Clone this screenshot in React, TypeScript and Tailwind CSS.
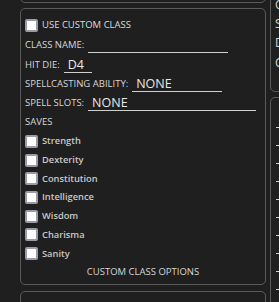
import React from 'react';

const saves = ['Strength', 'Dexterity', 'Constitution', 'Intelligence', 'Wisdom', 'Charisma', 'Sanity'];

function Box() {
  return <span className="block w-[13px] h-[13px] rounded-[2px] border-2 border-[#9a9aa8] bg-white shrink-0" />;
}

function Field({ label, value, width, h }: { label: string; value?: string; width: string; h: string }) {
  return (
    <div className={`flex items-end ${h}`}>
      <span className="text-[9.5px] leading-[13px] pb-[2px] text-[#d6d6d6] whitespace-nowrap">{label}</span>
      <div className={`ml-1 border-b border-[#d0d0d0] h-[16px] pl-[4px] text-[12.5px] leading-[16px] text-[#e8e8e8] ${width}`}>
        {value}
      </div>
    </div>
  );
}

export default function App() {
  return (
    <div
      className="w-[279px] h-[302px] overflow-hidden bg-[#1f1f1f] flex"
      style={{ fontFamily: '"Open Sans", "Noto Sans", sans-serif' }}
    >
      <div className="w-[266px] shrink-0 pl-[20px] flex flex-col">
        <div className="-mt-[20px] h-[23px] border border-[#5a5a5a] rounded-[5px] shrink-0" />
        <div className="mt-[5px] h-[277px] border border-[#5a5a5a] rounded-[5px] shrink-0 pl-[4px] pt-[7px] flex flex-col">
          <div className="flex items-center h-[18px]">
            <Box />
            <span className="ml-[4px] text-[9.5px] text-[#dcdcdc]">USE CUSTOM CLASS</span>
          </div>
          <Field label="CLASS NAME:" width="w-[140px]" h="h-[19px]" />
          <Field label="HIT DIE:" value="D4" width="w-[28px]" h="h-[20px]" />
          <Field label="SPELLCASTING ABILITY:" value="NONE" width="w-[90px]" h="h-[19px]" />
          <Field label="SPELL SLOTS:" value="NONE" width="w-[168px]" h="h-[19px]" />
          <div className="h-[21px] flex items-center text-[9.5px] text-[#d6d6d6] pt-[2px]">SAVES</div>
          <div className="flex flex-col">
            {saves.map((s) => (
              <div key={s} className="flex items-center h-[18.7px]">
                <Box />
                <span className="ml-[4px] text-[9.3px] font-semibold text-[#c8c8c8]">{s}</span>
              </div>
            ))}
          </div>
          <div className="mt-[2px] text-center pr-[4px] text-[9.5px] text-[#d6d6d6]">CUSTOM CLASS OPTIONS</div>
        </div>
        <div className="mt-[6px] h-[40px] border border-[#5a5a5a] rounded-[5px] shrink-0" />
      </div>
      <div className="ml-[4px] w-[40px] shrink-0 flex flex-col">
        <div className="-mt-[10px] h-[102px] border border-[#5a5a5a] rounded-[5px] shrink-0 pl-[4px] pt-[4px] flex flex-col text-[12px] leading-[19px] text-[#d6d6d6]">
          <span>CLASS</span>
          <span>SUBCLASS</span>
          <span>DEITY</span>
          <span className="mt-[1px]">CAMPAIGN</span>
        </div>
        <div className="mt-[5px] h-[260px] border border-[#5a5a5a] rounded-[5px] shrink-0 pl-[5px] pt-[29px] flex flex-col">
          {Array.from({ length: 10 }).map((_, i) => (
            <div key={i} className="h-[18px] flex items-start">
              <div className="w-[30px] border-t border-[#d0d0d0]" />
            </div>
          ))}
        </div>
      </div>
    </div>
  );
}
